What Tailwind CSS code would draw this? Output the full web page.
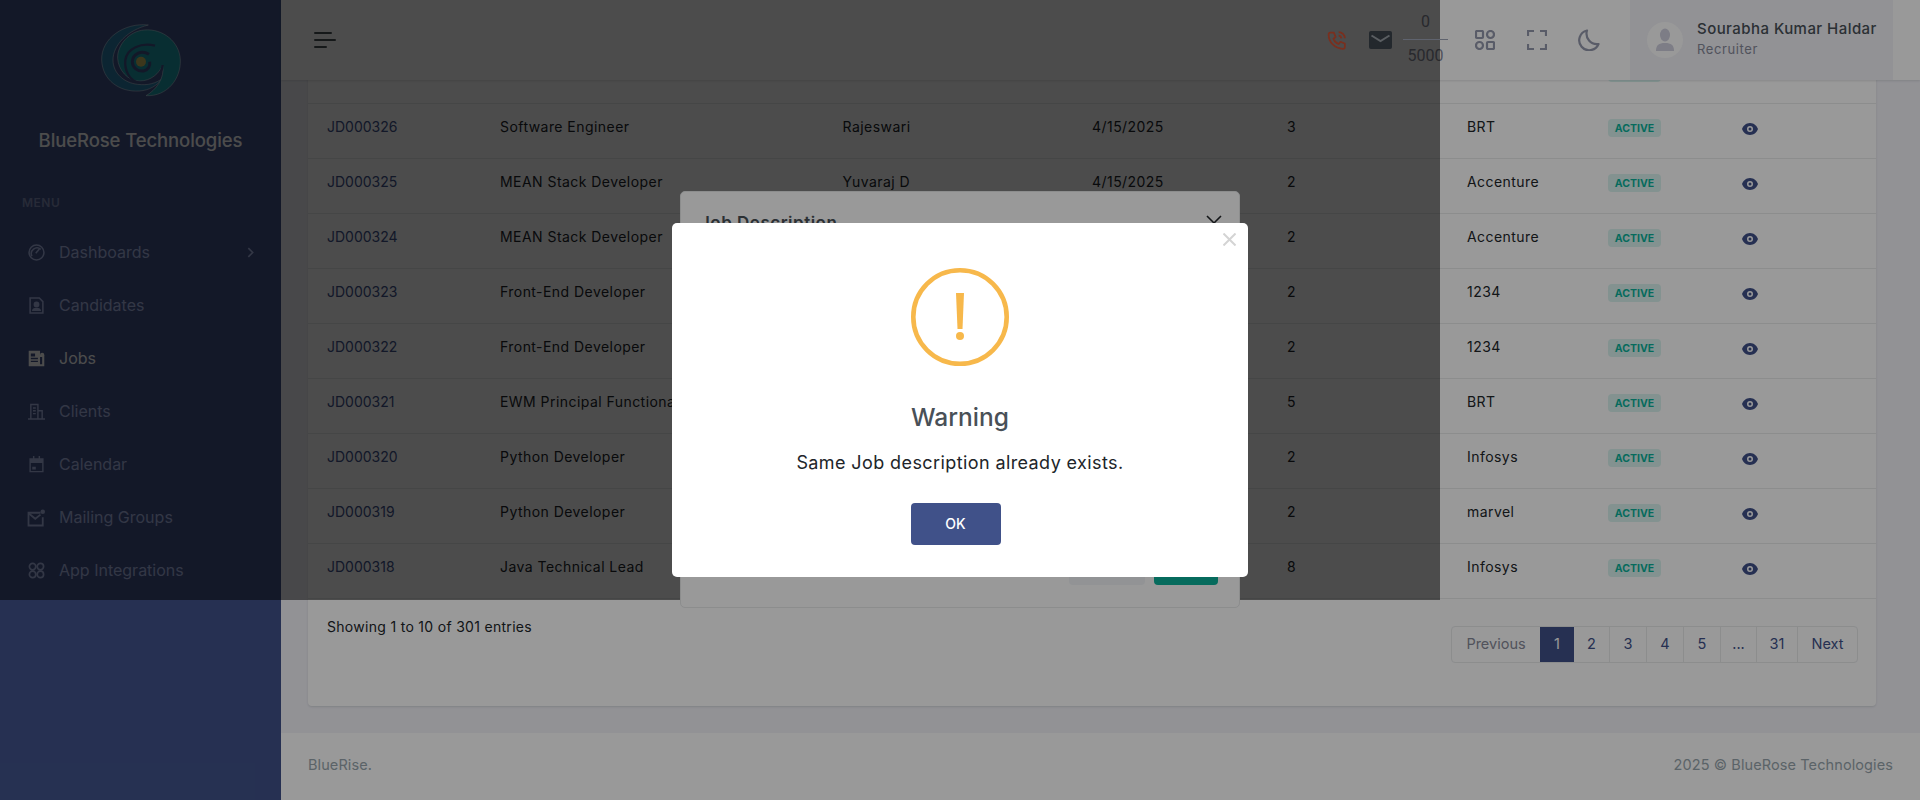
<!DOCTYPE html>
<html lang="en">

<head>
    <meta charset="UTF-8" />
    <title>BlueRose Technologies - Jobs</title>
    <script src="https://cdn.jsdelivr.net/npm/@tailwindcss/browser@4"></script>
</head>

<body class="overflow-hidden bg-[#f3f3f9] font-['Inter','Liberation_Sans',sans-serif]">
    <div class="relative flex h-[800px] w-[1920px] overflow-hidden">

        <!-- sidebar -->
        <aside class="flex w-[281px] shrink-0 flex-col bg-[#405189]">
            <div class="flex h-[195px] flex-col items-center pt-[15px]">
                <svg class="h-[90px] w-[100px] shrink-0" viewBox="0 0 300 270" fill="none">
                    <path fill="#2a7fa8" stroke="#dfe6ee" stroke-width="1.5" d="M172,30 C100,22 30,70 32,135 C34,195 85,232 145,228 C175,226 198,212 215,190 C195,205 170,212 140,208 C100,204 66,175 66,135 C66,90 110,45 172,30 Z" />
                    <path fill="#1c9aa8" stroke="#dfe6ee" stroke-width="1.5" d="M165,242 C230,245 270,190 268,135 C266,80 215,40 160,45 C115,48 78,90 80,130 C82,165 110,198 145,198 C180,198 205,175 215,150 C222,190 195,225 165,242 Z" />
                    <path stroke="#405189" stroke-width="7" d="M215,150 C212,185 175,208 145,203 C115,198 100,165 103,135 C108,100 150,82 192,92" />
                    <path stroke="#405189" stroke-width="9" d="M174,118 C150,103 125,118 124,140 C124,158 140,170 158,168 C172,165 178,152 176,140" />
                    <circle cx="150" cy="140" r="15" fill="#c8b860" />
                </svg>
                <div class="mt-[23px] text-[18.500px] leading-[24px] font-medium tracking-[-0.1px] text-white">BlueRose Technologies</div>
            </div>
            <div class="pl-[22px] text-[12px] leading-[16px] font-semibold tracking-[0.5px] text-[#838fb9]">MENU</div>

            <nav class="mt-[15px] flex flex-col text-[16px] leading-[53px] text-[#abb9e8]">
                <a class="flex h-[53px] items-center pr-[24px] pl-[28px]">
                    <svg class="mr-[14px] h-[17px] w-[17px]" viewBox="0 0 24 24" fill="none" stroke="currentColor" stroke-width="2.2"><circle cx="12" cy="12" r="10.5" /><path d="M18 7.5a8 8 0 0 0-12.5 9.5" /><path d="M11 13l5-6" /></svg>
                    <span>Dashboards</span>
                    <svg class="ml-auto h-[13px] w-[13px]" viewBox="0 0 24 24" fill="none" stroke="currentColor" stroke-width="3"><path d="M8 4l8 8-8 8" /></svg>
                </a>
                <a class="flex h-[53px] items-center pl-[28px]">
                    <svg class="mr-[14px] h-[17px] w-[17px]" viewBox="0 0 24 24" fill="none" stroke="currentColor" stroke-width="2.2"><path d="M3 1.5h13l5 5v16H3z" /><circle cx="12" cy="10.5" r="3" fill="currentColor" /><path d="M7 18.5c1-3 9-3 10 0z" fill="currentColor" /></svg>
                    <span>Candidates</span>
                </a>
                <a class="flex h-[53px] items-center pl-[28px] text-white">
                    <svg class="mr-[14px] h-[17px] w-[17px]" viewBox="0 0 24 24" fill="currentColor"><path fill-rule="evenodd" d="M1 1h16v6h6v16H1zM4 5v4h6V5zm0 6v2h10v-2zm0 4v2h10v-2zm13-5v10h3V10z" /><circle cx="20" cy="7" r="3" /></svg>
                    <span>Jobs</span>
                </a>
                <a class="flex h-[53px] items-center pl-[28px]">
                    <svg class="mr-[14px] h-[17px] w-[17px]" viewBox="0 0 24 24" fill="none" stroke="currentColor" stroke-width="2"><path d="M0 22.5h24M4 22V2h10v20M14 11h6v11" /><path d="M7 7h4M7 11h4M7 15h4" /></svg>
                    <span>Clients</span>
                </a>
                <a class="flex h-[53px] items-center pl-[28px]">
                    <svg class="mr-[14px] h-[17px] w-[17px]" viewBox="0 0 24 24" fill="currentColor"><path fill-rule="evenodd" d="M7 0h2v3h6V0h2v3h5v20H2V3h5zM4 10v11h16V10zm2 5h5v4H6z" /></svg>
                    <span>Calendar</span>
                </a>
                <a class="flex h-[53px] items-center pl-[27px]">
                    <svg class="mr-[14px] h-[18px] w-[18px]" viewBox="0 0 24 24" fill="none" stroke="currentColor" stroke-width="2.4"><path d="M18 5H2v17h19V11" /><path d="M2.5 6l8.5 7 7-5.500" /><circle cx="21" cy="3.500" r="3" fill="currentColor" stroke="none" /></svg>
                    <span>Mailing Groups</span>
                </a>
                <a class="flex h-[53px] items-center pl-[28px]">
                    <svg class="mr-[14px] h-[17px] w-[17px]" viewBox="0 0 24 24" fill="none" stroke="currentColor" stroke-width="2.4"><circle cx="6.500" cy="6.500" r="4.500" /><circle cx="17.500" cy="6.500" r="4.500" /><circle cx="6.500" cy="17.500" r="4.500" /><circle cx="17.500" cy="17.500" r="4.500" /></svg>
                    <span>App Integrations</span>
                </a>
            </nav>
        </aside>

        <!-- main -->
        <main class="relative flex min-w-0 flex-1 flex-col">
            <header class="absolute top-0 right-0 left-0 flex h-20 items-center bg-white shadow-[0_1px_2px_rgba(56,65,74,0.15)]">
                <button class="ml-[33px] flex flex-col gap-[4.600px]">
                    <span class="block h-[2px] w-[18px] rounded bg-[#495057]"></span>
                    <span class="block h-[2px] w-[22px] rounded bg-[#495057]"></span>
                    <span class="block h-[2px] w-[13px] rounded bg-[#495057]"></span>
                </button>
                <!-- phone, mail and the counter rule sit above the second backdrop, they only dim once in the reference -->
                <div class="relative z-[45] mr-[22px] ml-auto h-[21px] w-[21px] text-[#7a2f1e]">
                    <svg viewBox="0 0 24 24" fill="none" stroke="currentColor" stroke-width="2"><path d="M5 3h4l2 5-2.500 2c1 3 3 5 6 6l2-2.500 5 2v4c0 1-1 2-2 2C10 21 3 14 3 5c0-1 1-2 2-2z" stroke-linejoin="round" /><path d="M14.500 2.500a7 7 0 0 1 7 7M14.500 6.500a3.500 3.500 0 0 1 3 3" /></svg>
                </div>
                <div class="relative z-[45] mr-[11px] h-[18px] w-[23px] rounded-[2px] bg-[#23282d]">
                    <svg class="h-[18px] w-[23px]" viewBox="0 0 23 18" fill="none" stroke="#5a5e62" stroke-width="2"><path d="M2.500 4.500l9 5.500 9-5.500" /></svg>
                </div>
                <div class="mr-[27px] flex w-[45px] flex-col items-center font-['Roboto',sans-serif] text-[16px] text-[#878a99]">
                    <span class="h-[35px] leading-[35px]">0</span>
                    <span class="relative z-[45] block h-px w-full bg-[#5f636e]"></span>
                    <span class="h-[36px] w-full text-center leading-[31px]">5000</span>
                </div>
                <svg class="mr-[32px] h-[20px] w-[20px] text-[#9599ad]" viewBox="0 0 20 20" fill="none" stroke="currentColor" stroke-width="2.200"><rect x="1" y="1" width="7" height="7" rx="1" /><circle cx="15.500" cy="4.500" r="3.500" /><circle cx="4.500" cy="15.500" r="3.500" /><rect x="12" y="12" width="7" height="7" rx="1" /></svg>
                <svg class="mr-[31px] h-[20px] w-[20px] text-[#9599ad]" viewBox="0 0 20 20" fill="none" stroke="currentColor" stroke-width="2.200"><path d="M1 6V1h6M13 1h6v5M19 14v5h-6M7 19H1v-5" /></svg>
                <svg class="mr-[30px] h-[22px] w-[22px] text-[#9599ad]" viewBox="0 0 22 22" fill="none" stroke="currentColor" stroke-width="2.200"><path d="M9 1.500a10 10 0 1 0 11.500 13.500A10.500 10.500 0 0 1 9 1.500z" stroke-linejoin="round" /></svg>
                <div class="mr-[27px] flex h-20 w-[263px] items-center bg-[#f3f3f9] pl-[17px]">
                    <div class="flex h-[36px] w-[36px] items-center justify-center rounded-full bg-white">
                        <svg class="h-[24px] w-[20px] text-[#d0d0e0]" viewBox="0 0 20 24" fill="currentColor"><ellipse cx="10" cy="7" rx="5" ry="6.500" /><path d="M1 23c0-6 3-8 9-8s9 2 9 8z" /></svg>
                    </div>
                    <div class="ml-[14px] pb-[3px]">
                        <div class="text-[15px] leading-[20px] font-medium tracking-[0.45px] whitespace-nowrap text-[#495057]">Sourabha Kumar Haldar</div>
                        <div class="mt-[1px] text-[13px] leading-[18px] tracking-[0.6px] text-[#878a99]">Recruiter</div>
                    </div>
                </div>
            </header>

            <section class="mt-[48px] ml-[27px] h-[658px] w-[1568px] shrink-0 rounded-[4px] bg-white shadow-[0_1px_2px_rgba(56,65,74,0.15)]">
                <table class="w-full table-fixed border-b border-[#e9ebec] text-[14px] tracking-[0.45px] text-[#212529]">
                    <colgroup>
                        <col class="w-[173px]" />
                        <col class="w-[342.500px]" />
                        <col class="w-[249.500px]" />
                        <col class="w-[195px]" />
                        <col class="w-[180px]" />
                        <col class="w-[142px]" />
                        <col class="w-[133px]" />
                        <col class="w-[153px]" />
                    </colgroup>
                    <tbody>
                        <tr class="h-[55px]">
                            <td class="px-[19px] pb-[8px] tracking-normal text-[#405189]">JD000327</td>
                            <td class="px-[19px] pb-[8px] whitespace-nowrap">Solutions Engineer</td>
                            <td class="px-[19px] pb-[8px]">Rajeswari</td>
                            <td class="px-[19px] pb-[8px]">4/15/2025</td>
                            <td class="px-[19px] pb-[8px]">2</td>
                            <td class="px-[19px] pb-[8px]">BRT</td>
                            <td class="py-0 pr-[19px] pb-[8px] pl-[18px]"><span class="inline-flex h-[18px] w-[53px] items-center justify-center rounded-[4px] bg-[#0ab39c]/15 text-[10.500px] font-bold tracking-normal text-[#0ab39c]">ACTIVE</span></td>
                            <td class="px-[19px] pb-[6px]"><svg class="mt-[2px] h-[12px] w-[16px] text-[#405189]" viewBox="0 0 16 12" fill="currentColor"><path fill-rule="evenodd" d="M8 0c4 0 7 3 8 6-1 3-4 6-8 6S1 9 0 6c1-3 4-6 8-6zm0 3a3 3 0 1 0 0 6 3 3 0 0 0 0-6zm0 1.500a1.500 1.500 0 1 1 0 3 1.500 1.500 0 0 1 0-3z" /></svg></td>
                        </tr>
                        <tr class="h-[55px] border-t border-[#e9ebec]">
                            <td class="px-[19px] pb-[8px] tracking-normal text-[#405189]">JD000326</td>
                            <td class="px-[19px] pb-[8px] whitespace-nowrap">Software Engineer</td>
                            <td class="px-[19px] pb-[8px]">Rajeswari</td>
                            <td class="px-[19px] pb-[8px]">4/15/2025</td>
                            <td class="px-[19px] pb-[8px]">3</td>
                            <td class="px-[19px] pb-[8px]">BRT</td>
                            <td class="py-0 pr-[19px] pb-[8px] pl-[18px]"><span class="inline-flex h-[18px] w-[53px] items-center justify-center rounded-[4px] bg-[#0ab39c]/15 text-[10.500px] font-bold tracking-normal text-[#0ab39c]">ACTIVE</span></td>
                            <td class="px-[19px] pb-[6px]"><svg class="mt-[2px] h-[12px] w-[16px] text-[#405189]" viewBox="0 0 16 12" fill="currentColor"><path fill-rule="evenodd" d="M8 0c4 0 7 3 8 6-1 3-4 6-8 6S1 9 0 6c1-3 4-6 8-6zm0 3a3 3 0 1 0 0 6 3 3 0 0 0 0-6zm0 1.500a1.500 1.500 0 1 1 0 3 1.500 1.500 0 0 1 0-3z" /></svg></td>
                        </tr>
                        <tr class="h-[55px] border-t border-[#e9ebec]">
                            <td class="px-[19px] pb-[8px] tracking-normal text-[#405189]">JD000325</td>
                            <td class="px-[19px] pb-[8px] whitespace-nowrap">MEAN Stack Developer</td>
                            <td class="px-[19px] pb-[8px]">Yuvaraj D</td>
                            <td class="px-[19px] pb-[8px]">4/15/2025</td>
                            <td class="px-[19px] pb-[8px]">2</td>
                            <td class="px-[19px] pb-[8px]">Accenture</td>
                            <td class="py-0 pr-[19px] pb-[8px] pl-[18px]"><span class="inline-flex h-[18px] w-[53px] items-center justify-center rounded-[4px] bg-[#0ab39c]/15 text-[10.500px] font-bold tracking-normal text-[#0ab39c]">ACTIVE</span></td>
                            <td class="px-[19px] pb-[6px]"><svg class="mt-[2px] h-[12px] w-[16px] text-[#405189]" viewBox="0 0 16 12" fill="currentColor"><path fill-rule="evenodd" d="M8 0c4 0 7 3 8 6-1 3-4 6-8 6S1 9 0 6c1-3 4-6 8-6zm0 3a3 3 0 1 0 0 6 3 3 0 0 0 0-6zm0 1.500a1.500 1.500 0 1 1 0 3 1.500 1.500 0 0 1 0-3z" /></svg></td>
                        </tr>
                        <tr class="h-[55px] border-t border-[#e9ebec]">
                            <td class="px-[19px] pb-[8px] tracking-normal text-[#405189]">JD000324</td>
                            <td class="px-[19px] pb-[8px] whitespace-nowrap">MEAN Stack Developer</td>
                            <td class="px-[19px] pb-[8px]"></td>
                            <td class="px-[19px] pb-[8px]"></td>
                            <td class="px-[19px] pb-[8px]">2</td>
                            <td class="px-[19px] pb-[8px]">Accenture</td>
                            <td class="py-0 pr-[19px] pb-[8px] pl-[18px]"><span class="inline-flex h-[18px] w-[53px] items-center justify-center rounded-[4px] bg-[#0ab39c]/15 text-[10.500px] font-bold tracking-normal text-[#0ab39c]">ACTIVE</span></td>
                            <td class="px-[19px] pb-[6px]"><svg class="mt-[2px] h-[12px] w-[16px] text-[#405189]" viewBox="0 0 16 12" fill="currentColor"><path fill-rule="evenodd" d="M8 0c4 0 7 3 8 6-1 3-4 6-8 6S1 9 0 6c1-3 4-6 8-6zm0 3a3 3 0 1 0 0 6 3 3 0 0 0 0-6zm0 1.500a1.500 1.500 0 1 1 0 3 1.500 1.500 0 0 1 0-3z" /></svg></td>
                        </tr>
                        <tr class="h-[55px] border-t border-[#e9ebec]">
                            <td class="px-[19px] pb-[8px] tracking-normal text-[#405189]">JD000323</td>
                            <td class="px-[19px] pb-[8px] whitespace-nowrap">Front-End Developer</td>
                            <td class="px-[19px] pb-[8px]"></td>
                            <td class="px-[19px] pb-[8px]"></td>
                            <td class="px-[19px] pb-[8px]">2</td>
                            <td class="px-[19px] pb-[8px]">1234</td>
                            <td class="py-0 pr-[19px] pb-[8px] pl-[18px]"><span class="inline-flex h-[18px] w-[53px] items-center justify-center rounded-[4px] bg-[#0ab39c]/15 text-[10.500px] font-bold tracking-normal text-[#0ab39c]">ACTIVE</span></td>
                            <td class="px-[19px] pb-[6px]"><svg class="mt-[2px] h-[12px] w-[16px] text-[#405189]" viewBox="0 0 16 12" fill="currentColor"><path fill-rule="evenodd" d="M8 0c4 0 7 3 8 6-1 3-4 6-8 6S1 9 0 6c1-3 4-6 8-6zm0 3a3 3 0 1 0 0 6 3 3 0 0 0 0-6zm0 1.500a1.500 1.500 0 1 1 0 3 1.500 1.500 0 0 1 0-3z" /></svg></td>
                        </tr>
                        <tr class="h-[55px] border-t border-[#e9ebec]">
                            <td class="px-[19px] pb-[8px] tracking-normal text-[#405189]">JD000322</td>
                            <td class="px-[19px] pb-[8px] whitespace-nowrap">Front-End Developer</td>
                            <td class="px-[19px] pb-[8px]"></td>
                            <td class="px-[19px] pb-[8px]"></td>
                            <td class="px-[19px] pb-[8px]">2</td>
                            <td class="px-[19px] pb-[8px]">1234</td>
                            <td class="py-0 pr-[19px] pb-[8px] pl-[18px]"><span class="inline-flex h-[18px] w-[53px] items-center justify-center rounded-[4px] bg-[#0ab39c]/15 text-[10.500px] font-bold tracking-normal text-[#0ab39c]">ACTIVE</span></td>
                            <td class="px-[19px] pb-[6px]"><svg class="mt-[2px] h-[12px] w-[16px] text-[#405189]" viewBox="0 0 16 12" fill="currentColor"><path fill-rule="evenodd" d="M8 0c4 0 7 3 8 6-1 3-4 6-8 6S1 9 0 6c1-3 4-6 8-6zm0 3a3 3 0 1 0 0 6 3 3 0 0 0 0-6zm0 1.500a1.500 1.500 0 1 1 0 3 1.500 1.500 0 0 1 0-3z" /></svg></td>
                        </tr>
                        <tr class="h-[55px] border-t border-[#e9ebec]">
                            <td class="px-[19px] pb-[8px] tracking-normal text-[#405189]">JD000321</td>
                            <td class="px-[19px] pb-[8px] whitespace-nowrap">EWM Principal Functional Consultant</td>
                            <td class="px-[19px] pb-[8px]"></td>
                            <td class="px-[19px] pb-[8px]"></td>
                            <td class="px-[19px] pb-[8px]">5</td>
                            <td class="px-[19px] pb-[8px]">BRT</td>
                            <td class="py-0 pr-[19px] pb-[8px] pl-[18px]"><span class="inline-flex h-[18px] w-[53px] items-center justify-center rounded-[4px] bg-[#0ab39c]/15 text-[10.500px] font-bold tracking-normal text-[#0ab39c]">ACTIVE</span></td>
                            <td class="px-[19px] pb-[6px]"><svg class="mt-[2px] h-[12px] w-[16px] text-[#405189]" viewBox="0 0 16 12" fill="currentColor"><path fill-rule="evenodd" d="M8 0c4 0 7 3 8 6-1 3-4 6-8 6S1 9 0 6c1-3 4-6 8-6zm0 3a3 3 0 1 0 0 6 3 3 0 0 0 0-6zm0 1.500a1.500 1.500 0 1 1 0 3 1.500 1.500 0 0 1 0-3z" /></svg></td>
                        </tr>
                        <tr class="h-[55px] border-t border-[#e9ebec]">
                            <td class="px-[19px] pb-[8px] tracking-normal text-[#405189]">JD000320</td>
                            <td class="px-[19px] pb-[8px] whitespace-nowrap">Python Developer</td>
                            <td class="px-[19px] pb-[8px]"></td>
                            <td class="px-[19px] pb-[8px]"></td>
                            <td class="px-[19px] pb-[8px]">2</td>
                            <td class="px-[19px] pb-[8px]">Infosys</td>
                            <td class="py-0 pr-[19px] pb-[8px] pl-[18px]"><span class="inline-flex h-[18px] w-[53px] items-center justify-center rounded-[4px] bg-[#0ab39c]/15 text-[10.500px] font-bold tracking-normal text-[#0ab39c]">ACTIVE</span></td>
                            <td class="px-[19px] pb-[6px]"><svg class="mt-[2px] h-[12px] w-[16px] text-[#405189]" viewBox="0 0 16 12" fill="currentColor"><path fill-rule="evenodd" d="M8 0c4 0 7 3 8 6-1 3-4 6-8 6S1 9 0 6c1-3 4-6 8-6zm0 3a3 3 0 1 0 0 6 3 3 0 0 0 0-6zm0 1.500a1.500 1.500 0 1 1 0 3 1.500 1.500 0 0 1 0-3z" /></svg></td>
                        </tr>
                        <tr class="h-[55px] border-t border-[#e9ebec]">
                            <td class="px-[19px] pb-[8px] tracking-normal text-[#405189]">JD000319</td>
                            <td class="px-[19px] pb-[8px] whitespace-nowrap">Python Developer</td>
                            <td class="px-[19px] pb-[8px]"></td>
                            <td class="px-[19px] pb-[8px]"></td>
                            <td class="px-[19px] pb-[8px]">2</td>
                            <td class="px-[19px] pb-[8px]">marvel</td>
                            <td class="py-0 pr-[19px] pb-[8px] pl-[18px]"><span class="inline-flex h-[18px] w-[53px] items-center justify-center rounded-[4px] bg-[#0ab39c]/15 text-[10.500px] font-bold tracking-normal text-[#0ab39c]">ACTIVE</span></td>
                            <td class="px-[19px] pb-[6px]"><svg class="mt-[2px] h-[12px] w-[16px] text-[#405189]" viewBox="0 0 16 12" fill="currentColor"><path fill-rule="evenodd" d="M8 0c4 0 7 3 8 6-1 3-4 6-8 6S1 9 0 6c1-3 4-6 8-6zm0 3a3 3 0 1 0 0 6 3 3 0 0 0 0-6zm0 1.500a1.500 1.500 0 1 1 0 3 1.500 1.500 0 0 1 0-3z" /></svg></td>
                        </tr>
                        <tr class="h-[55px] border-t border-[#e9ebec]">
                            <td class="px-[19px] pb-[8px] tracking-normal text-[#405189]">JD000318</td>
                            <td class="px-[19px] pb-[8px] whitespace-nowrap">Java Technical Lead</td>
                            <td class="px-[19px] pb-[8px]"></td>
                            <td class="px-[19px] pb-[8px]"></td>
                            <td class="px-[19px] pb-[8px]">8</td>
                            <td class="px-[19px] pb-[8px]">Infosys</td>
                            <td class="py-0 pr-[19px] pb-[8px] pl-[18px]"><span class="inline-flex h-[18px] w-[53px] items-center justify-center rounded-[4px] bg-[#0ab39c]/15 text-[10.500px] font-bold tracking-normal text-[#0ab39c]">ACTIVE</span></td>
                            <td class="px-[19px] pb-[6px]"><svg class="mt-[2px] h-[12px] w-[16px] text-[#405189]" viewBox="0 0 16 12" fill="currentColor"><path fill-rule="evenodd" d="M8 0c4 0 7 3 8 6-1 3-4 6-8 6S1 9 0 6c1-3 4-6 8-6zm0 3a3 3 0 1 0 0 6 3 3 0 0 0 0-6zm0 1.500a1.500 1.500 0 1 1 0 3 1.500 1.500 0 0 1 0-3z" /></svg></td>
                        </tr>
                    </tbody>
                </table>

                <div class="flex items-start justify-between pr-[18px] pl-[19px]">
                    <div class="pt-[18px] text-[14px] leading-[20px] tracking-[0.3px] text-[#212529]">Showing 1 to 10 of 301 entries</div>
                    <div class="mt-[27px] flex h-[37px] overflow-hidden rounded-[4px] border border-[#e9ebec] text-[14.500px] text-[#405189]">
                        <a class="flex w-[88px] items-center justify-center text-[#878a99]">Previous</a>
                        <a class="flex w-[34px] items-center justify-center bg-[#405189] text-white">1</a>
                        <a class="flex w-[36px] items-center justify-center border-r border-[#e9ebec]">2</a>
                        <a class="flex w-[37px] items-center justify-center border-r border-[#e9ebec]">3</a>
                        <a class="flex w-[37px] items-center justify-center border-r border-[#e9ebec]">4</a>
                        <a class="flex w-[37px] items-center justify-center border-r border-[#e9ebec]">5</a>
                        <a class="flex w-[36px] items-center justify-center border-r border-[#e9ebec]">...</a>
                        <a class="flex w-[41px] items-center justify-center border-r border-[#e9ebec]">31</a>
                        <a class="flex w-[59px] items-center justify-center">Next</a>
                    </div>
                </div>
            </section>

            <footer class="mt-[27px] flex h-[67px] items-center justify-between bg-white pr-[27px] pb-[4px] pl-[27px] text-[14.500px] tracking-[0.1px] text-[#98a6ad]">
                <span>BlueRise.</span>
                <span>2025 © BlueRose Technologies</span>
            </footer>
        </main>

        <!-- first backdrop only reaches the viewport it was sized for -->
        <div class="absolute top-0 left-0 z-20 h-[600px] w-[1440px] bg-black/50"></div>

        <!-- job description modal -->
        <div class="absolute top-[191px] left-[680px] z-30 flex h-[417px] w-[560px] flex-col rounded-[5px] border border-[#e9ebec] bg-white">
            <div class="flex items-center justify-between pt-[20px] pr-[17px] pl-[19px]">
                <div class="text-[17px] leading-[22px] font-semibold tracking-[0.5px] text-[#495057]">Job Description</div>
                <svg class="h-[16px] w-[16px] text-[#212529]" viewBox="0 0 16 16" fill="none" stroke="currentColor" stroke-width="1.600"><path d="M1 1l14 14M15 1L1 15" /></svg>
            </div>
            <div class="mt-[311px] flex justify-end gap-[9px] pr-[21px]">
                <span class="block h-[40px] w-[76px] rounded-[4px] bg-[#f3f6f9]"></span>
                <span class="block h-[40px] w-[64px] rounded-[4px] bg-[#0ab39c]"></span>
            </div>
        </div>

        <!-- second backdrop -->
        <div class="absolute inset-0 z-40 bg-black/40"></div>

        <!-- warning alert -->
        <div class="absolute top-[223px] left-[672px] z-50 flex h-[354px] w-[576px] flex-col items-center rounded-[5px] bg-white pt-[45px]">
            <svg class="absolute top-[10px] right-[12px] h-[13px] w-[13px] text-[#d4d4d4]" viewBox="0 0 13 13" fill="none" stroke="currentColor" stroke-width="2"><path d="M0.500 0.500l12 12M12.500 0.500l-12 12" /></svg>
            <svg class="h-[98px] w-[98px]" viewBox="0 0 98 98" fill="none">
                <circle cx="49" cy="49" r="46.700" stroke="#f7b84b" stroke-width="4.600" />
                <path fill="#f7b84b" d="M45 25h8l-1.500 36h-5z" />
                <circle cx="49" cy="68" r="4" fill="#f7b84b" />
            </svg>
            <h2 class="mt-[35px] text-[24.500px] leading-[32px] font-medium text-[#495057]">Warning</h2>
            <p class="mt-[17px] text-[18px] leading-[26px] tracking-[0.4px] text-[#212529]">Same Job description already exists.</p>
            <button class="mt-[27px] mr-[9px] flex h-[42px] w-[90px] items-center justify-center rounded-[4px] bg-[#405189] pb-[2px] text-[14px] font-medium text-white">OK</button>
        </div>
    </div>
</body>

</html>
